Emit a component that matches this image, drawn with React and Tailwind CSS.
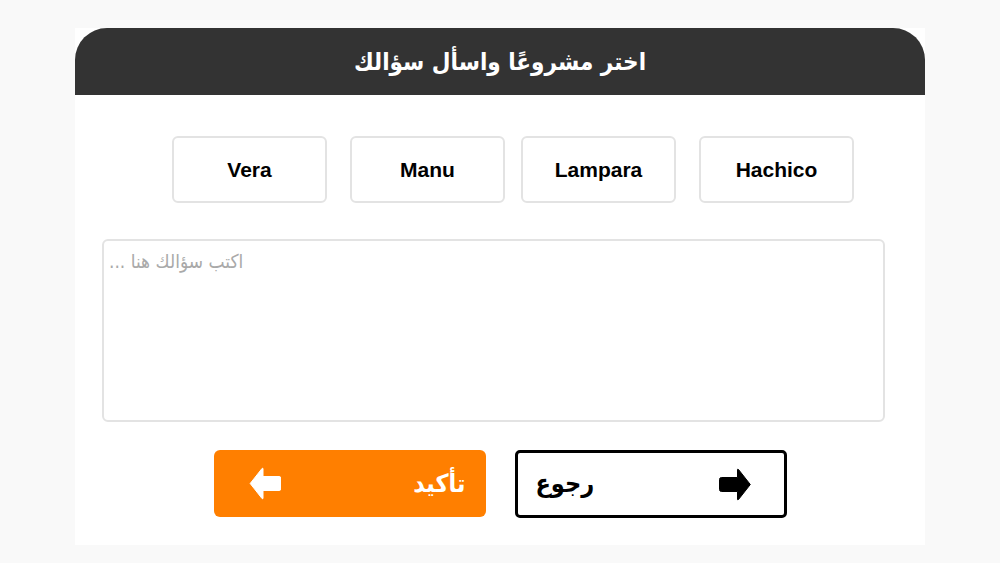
import React, { useState } from 'react';

const projects = [
  { name: 'Vera', gap: '' },
  { name: 'Manu', gap: 'ml-[23px]' },
  { name: 'Lampara', gap: 'ml-[16px]' },
  { name: 'Hachico', gap: 'ml-[23px]' },
];

const BlockArrow = ({ dir = 'left', className = '' }) => (
  <svg
    viewBox="0 0 32 33"
    className={className}
    style={dir === 'right' ? { transform: 'scaleX(-1)' } : undefined}
    fill="currentColor"
  >
    <path
      d="M1.2 16.5 L13 1.5 Q14 0.6 14 2 L14 9.5 L30 9.5 Q32 9.5 32 11.5 L32 21.5 Q32 23.5 30 23.5 L14 23.5 L14 31 Q14 32.4 13 31.5 Z"
      stroke="currentColor"
      strokeWidth="1"
      strokeLinejoin="round"
    />
  </svg>
);

export default function App() {
  const [selected, setSelected] = useState(null);
  const [question, setQuestion] = useState('');

  return (
    <div className="min-h-[563px] w-full bg-[#f9f9f9] pt-[28px] font-['DejaVu_Sans_Condensed','DejaVu_Sans',sans-serif]">
      <div className="mx-auto w-[850px] bg-white pb-[27px]">
        {/* header */}
        <div className="h-[67px] rounded-t-[32px] bg-[#333333] flex items-center justify-center">
          <h1 dir="rtl" className="text-white text-[24px] font-bold">
            اختر مشروعًا واسأل سؤالك
          </h1>
        </div>

        {/* projects */}
        <div className="flex pl-[97px] pt-[41px]">
          {projects.map((p) => (
            <button
              key={p.name}
              onClick={() => setSelected(p.name)}
              className={`${p.gap} w-[155px] h-[67px] rounded-[6px] border-2 border-[#e3e3e3] bg-white text-[21px] font-bold text-black font-['Liberation_Sans',Arial,sans-serif] ${
                selected === p.name ? 'border-[#ff7f00]' : ''
              }`}
            >
              {p.name}
            </button>
          ))}
        </div>

        {/* question */}
        <div className="px-[27px] pt-[36px]">
          <textarea
            dir="rtl"
            value={question}
            onChange={(e) => setQuestion(e.target.value)}
            placeholder="اكتب سؤالك هنا ..."
            className="block w-[783px] h-[183px] resize-none rounded-[6px] border-2 border-[#e3e3e3] px-[5px] py-[6px] text-left text-[19px] text-black placeholder:text-[#a9a9a9] outline-none font-['DejaVu_Sans_Condensed','DejaVu_Sans',sans-serif]"
          />
        </div>

        {/* actions */}
        <div className="flex justify-center gap-[29px] pt-[28px]">
          <button className="w-[272px] h-[67px] rounded-[6px] bg-[#ff7f00] flex items-center justify-between pl-[35px] pr-[20px] text-white">
            <BlockArrow dir="left" className="w-[32px] h-[33px]" />
            <span dir="rtl" className="text-[25px] font-bold">تأكيد</span>
          </button>
          <button className="w-[272px] h-[68px] rounded-[5px] border-[3px] border-black bg-white flex items-center justify-between pl-[18px] pr-[32px] text-black">
            <span dir="rtl" className="text-[25px] font-bold">رجوع</span>
            <BlockArrow dir="right" className="w-[33px] h-[33px]" />
          </button>
        </div>
      </div>
    </div>
  );
}
